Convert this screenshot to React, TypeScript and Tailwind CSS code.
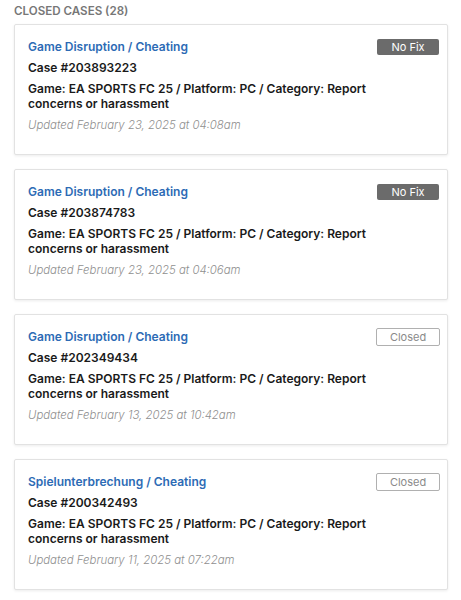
import React from "react";

type Case = { title: string; num: string; date: string; status: "No Fix" | "Closed" };

const cases: Case[] = [
  { title: "Game Disruption / Cheating", num: "203893223", date: "February 23, 2025 at 04:08am", status: "No Fix" },
  { title: "Game Disruption / Cheating", num: "203874783", date: "February 23, 2025 at 04:06am", status: "No Fix" },
  { title: "Game Disruption / Cheating", num: "202349434", date: "February 13, 2025 at 10:42am", status: "Closed" },
  { title: "Spielunterbrechung / Cheating", num: "200342493", date: "February 11, 2025 at 07:22am", status: "Closed" },
];

export default function App() {
  return (
    <div className="w-[461px] h-[600px] bg-white overflow-hidden px-[14px] pt-[3px]" style={{ fontFamily: "Inter, 'Noto Sans', sans-serif" }}>
      <div className="text-[11.6px] font-semibold text-[#777777] leading-[16px]">CLOSED CASES (28)</div>
      <div className="flex flex-col gap-[14px] mt-[5px]">
        {cases.map((c, i) => (
          <div key={i} className="relative h-[131px] w-[434px] border border-[#e2e2e2] rounded-[2px] bg-white shadow-[0_1px_3px_rgba(0,0,0,0.08)] pl-[13px] pr-[8px] pt-[13px]">
            <div className="text-[12px] font-semibold text-[#2d6bb5] leading-[18px]">{c.title}</div>
            <div className="text-[12px] font-semibold text-[#1a1a1a] leading-[16px] mt-[4px]">Case #{c.num}</div>
            <div className="text-[12px] font-semibold text-[#1a1a1a] leading-[15px] mt-[5px] w-[350px]">
              Game: EA SPORTS FC 25 / Platform: PC / Category: Report concerns or harassment
            </div>
            <div className="text-[11.4px] font-light italic text-[#8f8f8f] leading-[16px] mt-[6px]">Updated {c.date}</div>
            {c.status === "No Fix" ? (
              <div className="absolute right-[8px] top-[14px] w-[62px] h-[16px] rounded-[2px] bg-[#6b6b6b] text-white text-[11px] leading-[16px] text-center">No Fix</div>
            ) : (
              <div className="absolute right-[7px] top-[13px] w-[64px] h-[18px] rounded-[2px] border border-[#b0b0b0] text-[#8a8a8a] text-[11px] leading-[16px] text-center">Closed</div>
            )}
          </div>
        ))}
      </div>
    </div>
  );
}
